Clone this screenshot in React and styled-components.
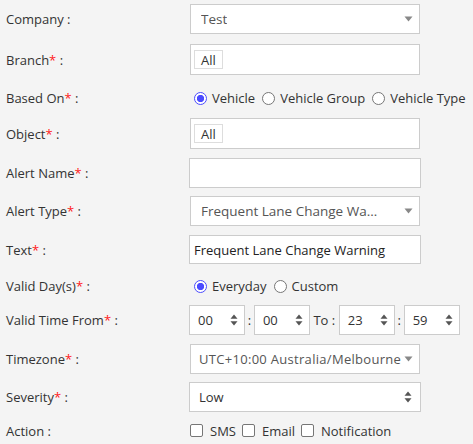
import React from 'react';
import styled, { createGlobalStyle, css } from 'styled-components';

const GlobalStyle = createGlobalStyle`
  html, body {
    margin: 0;
    padding: 0;
    background: #f4f4f4;
  }
  body {
    font-family: "Open Sans", "Liberation Sans", sans-serif;
    font-size: 13px;
    color: #333;
  }
`;

const Form = styled.form`
  display: flex;
  flex-direction: column;
  padding: 4px 0 0 6px;
`;

const Row = styled.div`
  display: grid;
  grid-template-columns: 183px 1fr;
  align-items: center;
  min-height: ${({ h }) => h || 30}px;
  margin-bottom: ${({ mb }) => (mb === undefined ? 9 : mb)}px;
`;

const Label = styled.label`
  color: #333;
  white-space: nowrap;
`;

const Req = styled.span`
  color: #ff1a1a;
`;

const boxBase = css`
  box-sizing: border-box;
  height: ${({ h }) => h || 30}px;
  background: #fff;
  border: 1px solid #ccc;
`;

const SelectBox = styled.div`
  ${boxBase};
  position: relative;
  width: 230px;
  margin-left: 1px;
  display: flex;
  align-items: center;
  padding: 0 ${({ pr }) => pr || 34}px 0 ${({ pl }) => pl || 10}px;
  color: #555;
  font-size: ${({ fs }) => fs || 13}px;
  letter-spacing: ${({ ls }) => ls || 0}px;

  span {
    min-width: 0;
    overflow: hidden;
    white-space: nowrap;
    text-overflow: ellipsis;
  }
`;

const Caret = styled.svg`
  position: absolute;
  right: 6px;
  top: 50%;
  margin-top: -3px;
`;

const TagBox = styled.div`
  ${boxBase};
  width: 230px;
  margin-left: 1px;
  display: flex;
  align-items: center;
  padding-left: 3px;
`;

const Tag = styled.span`
  box-sizing: border-box;
  height: 19px;
  display: inline-flex;
  align-items: center;
  padding: 0 6px;
  border: 1px solid #ddd;
  color: #333;
  background: #fff;
`;

const TextInput = styled.div`
  ${boxBase};
  width: 232px;
  display: flex;
  align-items: center;
  padding-left: 4px;
  color: #222;
`;

const NativeSelect = styled.div`
  ${boxBase};
  position: relative;
  width: 232px;
  display: flex;
  align-items: center;
  padding-left: 9px;
  color: #333;
`;

const UpDown = styled.svg`
  position: absolute;
  right: ${({ r }) => r || 8}px;
  top: 50%;
  margin-top: -6px;
`;

const Options = styled.div`
  display: flex;
  align-items: center;
  gap: ${({ gap }) => (gap === undefined ? 2 : gap)}px;
`;

const Option = styled.label`
  display: inline-flex;
  align-items: center;
  color: #333;
`;

const Radio = styled.span`
  box-sizing: border-box;
  width: 13px;
  height: 13px;
  margin: 0 5px 0 5px;
  border-radius: 50%;
  background: #fff;
  border: 1px solid ${({ checked }) => (checked ? '#4b4bff' : '#767676')};

  ${({ checked }) => checked && css`
    background: radial-gradient(circle, #4b4bff 0 3.4px, #fff 3.9px);
  `}
`;

const Check = styled.span`
  box-sizing: border-box;
  width: 13px;
  height: 13px;
  margin: 0 7px 0 ${({ first }) => (first ? 1 : 6)}px;
  border-radius: 2px;
  border: 1px solid #767676;
  background: #fff;
`;

const TimeRow = styled.div`
  display: flex;
  align-items: center;
`;

const Spin = styled.div`
  ${boxBase};
  position: relative;
  width: 56px;
  display: flex;
  align-items: center;
  padding-left: 8px;
  color: #333;
`;

const Sep = styled.span`
  color: #333;
  padding: 0 ${({ px }) => px || 2.75}px;
`;

const UpDownIcon = ({ r }) => (
  <UpDown r={r} width="8" height="12" viewBox="0 0 8 12">
    <path d="M4 0.5 L7.5 4.8 L0.5 4.8 Z" fill="#555" />
    <path d="M4 11.5 L7.5 7.2 L0.5 7.2 Z" fill="#555" />
  </UpDown>
);

const Select = ({ value, pl, pr, ls, fs }) => (
  <SelectBox pl={pl} pr={pr} ls={ls} fs={fs}>
    <span>{value}</span>
    <Caret width="9" height="6" viewBox="0 0 9 6">
      <path d="M0.5 0.5 L8.5 0.5 L4.5 5.5 Z" fill="#888" />
    </Caret>
  </SelectBox>
);

const Field = ({ label, required, children, h, mb }) => (
  <Row h={h} mb={mb}>
    <Label>
      {label}
      {required && <Req>*</Req>} :
    </Label>
    <div>{children}</div>
  </Row>
);

const TimeSpin = ({ value }) => (
  <Spin>
    {value}
    <UpDownIcon r={6} />
  </Spin>
);

export default function App() {
  return (
    <>
      <GlobalStyle />
      <Form>
        <Field label="Company" mb={10}>
          <Select value="Test" fs={13.5} />
        </Field>
        <Field label="Branch" required h={31} mb={13}>
          <TagBox h={31}><Tag>All</Tag></TagBox>
        </Field>
        <Field label="Based On" required h={20} mb={10}>
          <Options>
            <Option><Radio checked />Vehicle</Option>
            <Option><Radio />Vehicle Group</Option>
            <Option><Radio />Vehicle Type</Option>
          </Options>
        </Field>
        <Field label="Object" required h={31}>
          <TagBox h={31}><Tag>All</Tag></TagBox>
        </Field>
        <Field label="Alert Name" required mb={8}>
          <TextInput />
        </Field>
        <Field label="Alert Type" required>
          <Select value="Frequent Lane Change Warning" pr={38} fs={13.5} />
        </Field>
        <Field label="Text" required h={29} mb={12}>
          <TextInput h={29}>Frequent Lane Change Warning</TextInput>
        </Field>
        <Field label="Valid Day(s)" required h={20}>
          <Options>
            <Option><Radio checked />Everyday</Option>
            <Option><Radio />Custom</Option>
          </Options>
        </Field>
        <Field label="Valid Time From" required h={29}>
          <TimeRow>
            <TimeSpin value="00" />
            <Sep>:</Sep>
            <TimeSpin value="00" />
            <Sep px={3.5}>To :</Sep>
            <TimeSpin value="23" />
            <Sep>:</Sep>
            <TimeSpin value="59" />
          </TimeRow>
        </Field>
        <Field label="Timezone" required mb={8}>
          <Select value="UTC+10:00 Australia/Melbourne" pl={8} pr={12} ls={0.3} />
        </Field>
        <Field label="Severity" required>
          <NativeSelect>
            Low
            <UpDownIcon r={8} />
          </NativeSelect>
        </Field>
        <Field label="Action" h={19}>
          <Options gap={0}>
            <Option><Check first />SMS</Option>
            <Option><Check />Email</Option>
            <Option><Check />Notification</Option>
          </Options>
        </Field>
      </Form>
    </>
  );
}
